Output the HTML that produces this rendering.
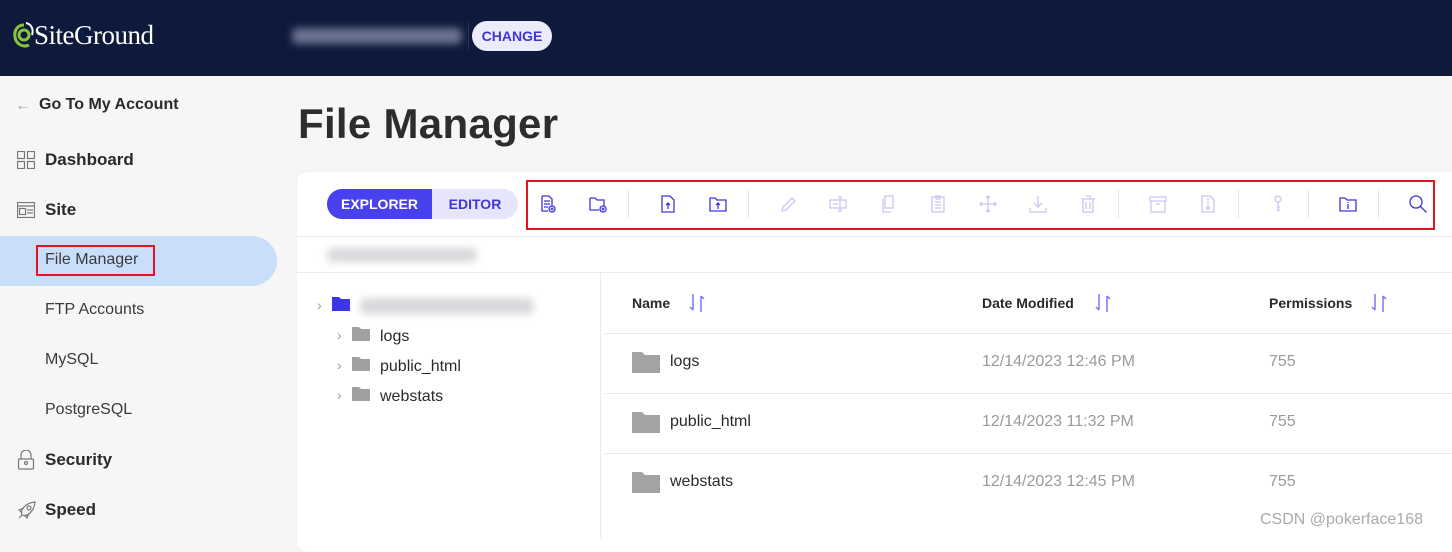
<!DOCTYPE html>
<html><head><meta charset="utf-8"><style>
*{margin:0;padding:0;box-sizing:border-box}
body{width:1452px;height:538px;overflow:hidden;background:#f6f6f6;font-family:"Liberation Sans",sans-serif;position:relative;color:#2b2b2b}
.a{position:absolute}
.hdr{left:0;top:0;width:1452px;height:76px;background:#0e1a3c}
.nav{font-size:17px;font-weight:bold;color:#2a2a2a}
.sub{font-size:16px;color:#3a3a3a}
.blur{background:#d8d8dc;filter:blur(4px);border-radius:6px}
.card{left:297px;top:172px;width:1170px;height:380px;background:#fff;border-radius:10px;box-shadow:0 0 4px rgba(0,0,0,.04)}
.th{font-size:14px;font-weight:bold;color:#2a2a2a}
.td{font-size:16px;color:#9a9a9a}
.nm{font-size:16px;color:#2a2a2a}
.ln{height:1px;background:#ebebeb}
svg.i{position:absolute;width:20px;height:20px;fill:none;stroke-width:1.3}
.on{stroke:#3d36d9}
.off{stroke:#c8c6f2}
.sep{position:absolute;width:1px;height:28px;top:190px;background:#e4e4e4}
</style></head><body>
<div class="a hdr"></div>
<svg class="a" style="left:12px;top:22px" width="24" height="28" viewBox="0 0 24 28"><path d="M12 3C5 3 2 9 3 15c1 7 8 11 14 8" stroke="#8ac43f" stroke-width="3" fill="none"/><circle cx="12" cy="13" r="5" stroke="#8ac43f" stroke-width="3" fill="none"/><path d="M14 1c5 1 8 6 6 12" stroke="#fff" stroke-width="2" fill="none"/></svg>
<div class="a" style="left:34px;top:20px;color:#fff;font-size:27px;font-family:'Liberation Serif',serif;letter-spacing:-0.5px">SiteGround</div>
<div class="a blur" style="left:292px;top:28px;width:170px;height:16px;background:#6b7390"></div>
<div class="a" style="left:468px;top:22px;width:1px;height:28px;background:#2a3556"></div>
<div class="a" style="left:472px;top:21px;width:80px;height:30px;border-radius:15px;background:#ecebfb;color:#3d36d9;font-size:14px;font-weight:bold;text-align:center;line-height:30px">CHANGE</div>

<div class="a" style="left:15px;top:97px;color:#aaa;font-size:16px">←</div>
<div class="a nav" style="left:39px;top:96px;font-size:16px">Go To My Account</div>
<svg class="a" style="left:17px;top:151px" width="18" height="18" fill="none" stroke="#777" stroke-width="1.2"><rect x="0.5" y="0.5" width="7" height="7"/><rect x="10.5" y="0.5" width="7" height="7"/><rect x="0.5" y="10.5" width="7" height="7"/><rect x="10.5" y="10.5" width="7" height="7"/></svg>
<div class="a nav" style="left:45px;top:150px">Dashboard</div>
<svg class="a" style="left:17px;top:202px" width="18" height="16" fill="none" stroke="#777" stroke-width="1.2"><rect x="0.5" y="0.5" width="17" height="15"/><line x1="0.5" y1="4" x2="17.5" y2="4"/><rect x="2.5" y="6.5" width="6" height="6"/><line x1="10" y1="8" x2="16" y2="8"/><line x1="10" y1="11" x2="16" y2="11"/></svg>
<div class="a nav" style="left:45px;top:200px">Site</div>
<div class="a" style="left:0;top:236px;width:277px;height:50px;background:#c9defb;border-radius:0 25px 25px 0"></div>
<div class="a" style="left:36px;top:245px;width:119px;height:31px;border:2px solid #e0141e"></div>
<div class="a sub" style="left:45px;top:251px;font-size:16px">File Manager</div>
<div class="a sub" style="left:45px;top:301px">FTP Accounts</div>
<div class="a sub" style="left:45px;top:351px">MySQL</div>
<div class="a sub" style="left:45px;top:401px">PostgreSQL</div>
<svg class="a" style="left:17px;top:450px" width="18" height="20" fill="none" stroke="#777" stroke-width="1.2"><path d="M4 9V5a5 5 0 0 1 10 0v4"/><rect x="1.5" y="9" width="15" height="10" rx="1"/><circle cx="9" cy="13" r="1.5"/></svg>
<div class="a nav" style="left:45px;top:450px">Security</div>
<svg class="a" style="left:17px;top:500px" width="20" height="20" fill="none" stroke="#777" stroke-width="1.2"><path d="M5 15C3 10 8 3 18 2c-1 10-8 15-13 13zM5 15l-3 3M7 8l-5 2 3 3M12 13l-2 5-3-3"/><circle cx="12" cy="8" r="2"/></svg>
<div class="a nav" style="left:45px;top:500px">Speed</div>

<div class="a" style="left:298px;top:100px;font-size:42px;font-weight:bold;color:#2d2d2d;letter-spacing:0.3px">File Manager</div>

<div class="a card"></div>
<div class="a" style="left:327px;top:189px;width:191px;height:30px;border-radius:15px;background:#e6e5fb;overflow:hidden">
<div class="a" style="left:0;top:0;width:105px;height:30px;background:#4a41ee;color:#fff;font-size:14px;font-weight:bold;text-align:center;line-height:30px">EXPLORER</div>
<div class="a" style="left:105px;top:0;width:86px;height:30px;color:#3d36d9;font-size:14px;font-weight:bold;text-align:center;line-height:30px">EDITOR</div>
</div>
<div class="a" style="left:526px;top:180px;width:909px;height:50px;border:2px solid #e0141e"></div>

<svg class="i on" style="left:538px;top:194px" viewBox="0 0 20 20"><path d="M4 2h7l3 3v7M4 2v15h6"/><path d="M6 7h6M6 10h6M6 13h4"/><circle cx="14" cy="15" r="3"/><path d="M14 13.5v3M12.5 15h3"/></svg>
<svg class="i on" style="left:588px;top:194px" viewBox="0 0 20 20"><path d="M2 4h5l2 2h7v6M2 4v12h9"/><circle cx="15" cy="15" r="3"/><path d="M15 13.5v3M13.5 15h3"/></svg>
<div class="sep" style="left:628px"></div>
<svg class="i on" style="left:658px;top:194px" viewBox="0 0 20 20"><path d="M4 2h8l4 4v12H4z"/><path d="M10 15V9M8 11l2-2 2 2"/></svg>
<svg class="i on" style="left:708px;top:194px" viewBox="0 0 20 20"><path d="M2 4h5l2 2h9v11H2z"/><path d="M10 15V9M8 11l2-2 2 2"/></svg>
<div class="sep" style="left:748px"></div>
<svg class="i off" style="left:778px;top:194px" viewBox="0 0 20 20"><path d="M4 17l1-4 9-9 3 3-9 9z"/></svg>
<svg class="i off" style="left:828px;top:194px" viewBox="0 0 20 20"><rect x="2" y="6" width="16" height="8"/><path d="M12 3v14M10 3h4M10 17h4M5 10h5"/></svg>
<svg class="i off" style="left:878px;top:194px" viewBox="0 0 20 20"><path d="M7 2h8v12H7zM5 5v13h8"/></svg>
<svg class="i off" style="left:928px;top:194px" viewBox="0 0 20 20"><rect x="4" y="3" width="12" height="15"/><path d="M8 2h4v3H8zM7 8h6M7 11h6M7 14h6"/></svg>
<svg class="i off" style="left:978px;top:194px" viewBox="0 0 20 20"><path d="M10 2v16M2 10h16M8 4l2-2 2 2M8 16l2 2 2-2M4 8l-2 2 2 2M16 8l2 2-2 2"/></svg>
<svg class="i off" style="left:1028px;top:194px" viewBox="0 0 20 20"><path d="M10 2v11M6 9l4 4 4-4M2 14v4h16v-4"/></svg>
<svg class="i off" style="left:1078px;top:194px" viewBox="0 0 20 20"><path d="M5 5h10v13H5zM3 5h14M8 2h4v3M8 8v7M12 8v7"/></svg>
<div class="sep" style="left:1118px"></div>
<svg class="i off" style="left:1148px;top:194px" viewBox="0 0 20 20"><path d="M2 3h16v4H2zM3 7v11h14V7M8 10h4"/></svg>
<svg class="i off" style="left:1198px;top:194px" viewBox="0 0 20 20"><path d="M4 2h8l4 4v12H4zM10 4v2M10 7v2M10 10v2M9 13h2v2H9z"/></svg>
<div class="sep" style="left:1238px"></div>
<svg class="i off" style="left:1268px;top:194px" viewBox="0 0 20 20"><circle cx="10" cy="5" r="3"/><path d="M10 8v10M10 13h2M10 16h2"/></svg>
<div class="sep" style="left:1308px"></div>
<svg class="i on" style="left:1338px;top:194px" viewBox="0 0 20 20"><path d="M2 4h5l2 2h9v11H2z"/><path d="M10 10v5M10 8v1"/></svg>
<div class="sep" style="left:1378px"></div>
<svg class="i on" style="left:1408px;top:194px" viewBox="0 0 20 20"><circle cx="8" cy="8" r="6"/><path d="M12.5 12.5l6 6"/></svg>

<div class="a ln" style="left:297px;top:236px;width:1155px"></div>
<div class="a blur" style="left:327px;top:248px;width:150px;height:14px"></div>
<div class="a ln" style="left:297px;top:272px;width:1155px"></div>
<div class="a" style="left:600px;top:272px;width:1px;height:266px;background:#ebebeb"></div>

<div class="a" style="left:317px;top:297px;color:#999;font-size:14px">›</div>
<svg class="a" style="left:332px;top:297px" width="18" height="14"><path d="M0 0h7l2 2h9v12H0z" fill="#3d36e6"/></svg>
<div class="a blur" style="left:360px;top:298px;width:174px;height:16px"></div>
<div class="a" style="left:337px;top:327px;color:#999;font-size:14px">›</div>
<svg class="a" style="left:352px;top:327px" width="18" height="14"><path d="M0 0h7l2 2h9v12H0z" fill="#a0a0a0"/></svg>
<div class="a nm" style="left:380px;top:328px">logs</div>
<div class="a" style="left:337px;top:357px;color:#999;font-size:14px">›</div>
<svg class="a" style="left:352px;top:357px" width="18" height="14"><path d="M0 0h7l2 2h9v12H0z" fill="#a0a0a0"/></svg>
<div class="a nm" style="left:380px;top:358px">public_html</div>
<div class="a" style="left:337px;top:387px;color:#999;font-size:14px">›</div>
<svg class="a" style="left:352px;top:387px" width="18" height="14"><path d="M0 0h7l2 2h9v12H0z" fill="#a0a0a0"/></svg>
<div class="a nm" style="left:380px;top:388px">webstats</div>

<div class="a th" style="left:632px;top:295px">Name</div>
<svg class="a" style="left:688px;top:293px" width="18" height="20" fill="none" stroke="#7d78f0" stroke-width="1.5"><path d="M5 1v16M2 14l3 3M13 19V3M13 3l3 3"/></svg>
<div class="a th" style="left:982px;top:295px">Date Modified</div>
<svg class="a" style="left:1094px;top:293px" width="18" height="20" fill="none" stroke="#7d78f0" stroke-width="1.5"><path d="M5 1v16M2 14l3 3M13 19V3M13 3l3 3"/></svg>
<div class="a th" style="left:1269px;top:295px">Permissions</div>
<svg class="a" style="left:1370px;top:293px" width="18" height="20" fill="none" stroke="#7d78f0" stroke-width="1.5"><path d="M5 1v16M2 14l3 3M13 19V3M13 3l3 3"/></svg>
<div class="a ln" style="left:604px;top:333px;width:848px"></div>
<div class="a ln" style="left:604px;top:393px;width:848px"></div>
<div class="a ln" style="left:604px;top:453px;width:848px"></div>

<svg class="a" style="left:632px;top:352px" width="28" height="21"><path d="M0 0h10l3 3h15v18H0z" fill="#a3a3a3"/></svg>
<div class="a nm" style="left:670px;top:353px">logs</div>
<div class="a td" style="left:982px;top:353px">12/14/2023 12:46 PM</div>
<div class="a td" style="left:1269px;top:353px">755</div>
<svg class="a" style="left:632px;top:412px" width="28" height="21"><path d="M0 0h10l3 3h15v18H0z" fill="#a3a3a3"/></svg>
<div class="a nm" style="left:670px;top:413px">public_html</div>
<div class="a td" style="left:982px;top:413px">12/14/2023 11:32 PM</div>
<div class="a td" style="left:1269px;top:413px">755</div>
<svg class="a" style="left:632px;top:472px" width="28" height="21"><path d="M0 0h10l3 3h15v18H0z" fill="#a3a3a3"/></svg>
<div class="a nm" style="left:670px;top:473px">webstats</div>
<div class="a td" style="left:982px;top:473px">12/14/2023 12:45 PM</div>
<div class="a td" style="left:1269px;top:473px">755</div>

<div class="a" style="left:1260px;top:511px;color:#aaa;font-size:16px">CSDN @pokerface168</div>
</body></html>
